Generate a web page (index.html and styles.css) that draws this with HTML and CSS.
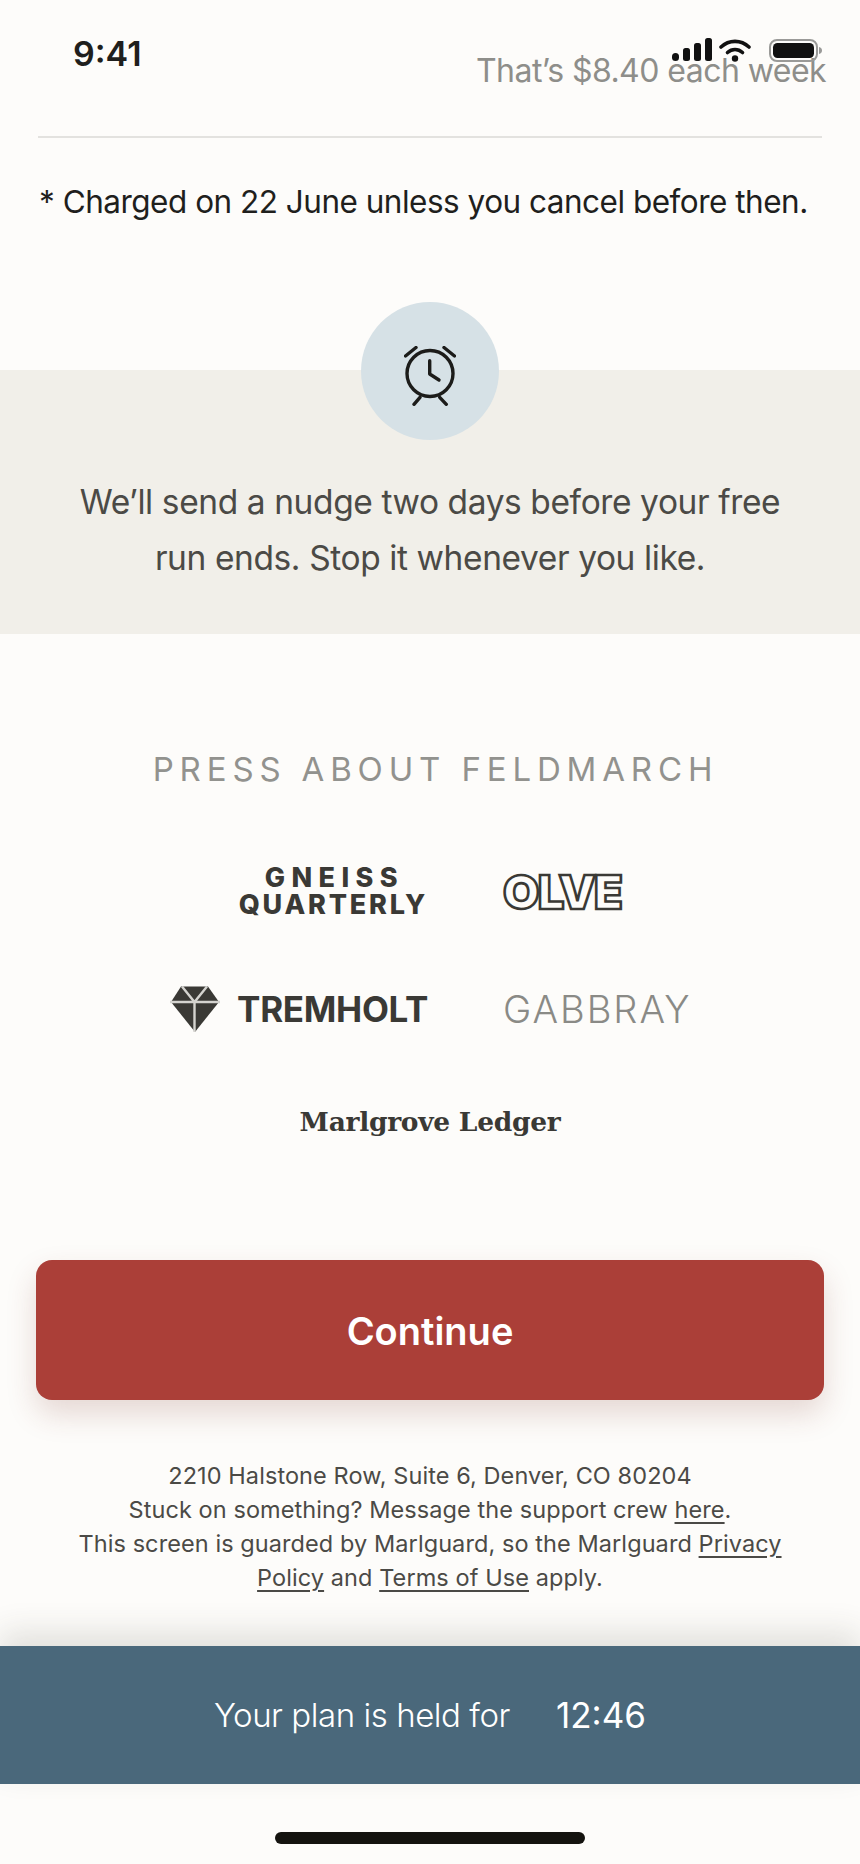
FILE: index.html
```html
<!DOCTYPE html>
<html lang="en">
<head>
    <meta charset="UTF-8">
    <meta name="viewport" content="width=device-width, initial-scale=1.0">
    <title>Feldmarch</title>
    <link rel="stylesheet" href="styles.css">
</head>
<body>
    <div class="status">
        <div class="time">9:41</div>
        <div class="sys">
            <svg width="40" height="26" viewBox="0 0 40 26"><rect x="0" y="15" width="7" height="8" rx="3.5"/><rect x="11" y="10" width="7" height="13" rx="2.5"/><rect x="22" y="5" width="7" height="18" rx="2.5"/><rect x="33" y="0" width="7" height="23" rx="2.5"/></svg>
            <svg width="32" height="26" viewBox="0 0 32 26"><path d="M2 9C10 1.500 22 1.500 30 9" fill="none" stroke="#111" stroke-width="3.600" stroke-linecap="round"/><path d="M8.500 14.500C13 10.500 19 10.500 23.500 14.500" fill="none" stroke="#111" stroke-width="3.600" stroke-linecap="round"/><circle cx="16" cy="20.500" r="3.200"/></svg>
            <svg class="batt" width="54" height="24" viewBox="0 0 54 24"><rect x="1" y="1" width="47" height="21" rx="7" fill="none" stroke="#9a9a98" stroke-width="2"/><rect x="4" y="4" width="41" height="15" rx="4.500"/><path d="M50 8c2 .6 3 1.800 3 3.500s-1 2.900-3 3.500z" fill="#9a9a98"/></svg>
        </div>
    </div>

    <div class="week">That’s $8.40 each week</div>
    <div class="rule"></div>
    <p class="charge">* Charged on 22 June unless you cancel before then.</p>

    <section class="nudge">
        <div class="bell">
            <svg width="52" height="60" viewBox="0 0 52 60" fill="none" stroke="#1c1c1a" stroke-width="3.400" stroke-linecap="round" stroke-linejoin="round">
                <circle cx="26" cy="27.500" r="23"/>
                <path d="M25.700 14.700V28L35 34"/>
                <path d="M1.500 10L12 1.500"/>
                <path d="M50.500 10L40 1.500"/>
                <path d="M16 51.300L10 58.300"/>
                <path d="M35.700 51.300L42.300 58.300"/>
            </svg>
        </div>
        <p>We’ll send a nudge two days before your free run ends. Stop it whenever you like.</p>
    </section>

    <section class="press">
        <h2>PRESS ABOUT FELDMARCH</h2>
        <div class="logos">
            <div class="cell right gneiss"><span class="sp">GNEISS</span><span>QUARTERLY</span></div>
            <div class="cell olve">OLVE</div>
            <div class="cell right trem">
                <svg width="50" height="46" viewBox="0 0 50 46"><path d="M11 .5h27l11 15.500L25 46 1 16z" fill="#3a3935"/><path d="M12 .5L24.500 16 37 .5M0 16h50M24.500 16v30" fill="none" stroke="#d4d3cf" stroke-width="2.400"/></svg>
                <span>TREMHOLT</span>
            </div>
            <div class="cell gabbray">GABBRAY</div>
        </div>
        <div class="ledger">Marlgrove Ledger</div>
    </section>

    <div class="btn">Continue</div>

    <div class="foot">
        2210 Halstone Row, Suite 6, Denver, CO 80204<br>
        Stuck on something? Message the support crew <u>here</u>.<br>
        This screen is guarded by Marlguard, so the Marlguard <u>Privacy<br>Policy</u> and <u>Terms of Use</u> apply.
    </div>

    <div class="timer"><span>Your plan is held for</span><b>12:46</b></div>
    <div class="home"><i></i></div>
</body>
</html>
```

FILE: styles.css
```css
*{
    margin:0;
    padding:0;
    box-sizing:border-box;
}
html,body{
    height:1864px;
    overflow:hidden;
}
body{
    position:relative;
    background:#fdfcfa;
    font-family:Inter,"Liberation Sans",sans-serif;
    color:#1f1f1d;
}
.status{
    position:absolute;
    top:0;
    left:0;
    width:100%;
    height:100px;
}
.time{
    position:absolute;
    left:73px;
    top:33px;
    font-size:34px;
    line-height:42px;
    font-weight:600;
}
.sys{
    position:absolute;
    left:672px;
    top:38px;
    display:flex;
    gap:7px;
}
.sys svg{
    fill:#111;
}
.sys .batt{
    margin-left:11px;
    margin-top:1px;
}
.week{
    padding-top:52px;
    padding-right:34px;
    height:136px;
    text-align:right;
    font-size:32px;
    line-height:38px;
    letter-spacing:-.55px;
    color:#8e8e8a;
}
.rule{
    height:2px;
    margin:0 38px;
    background:#e3e2df;
}
.charge{
    margin-top:44px;
    padding-left:39px;
    font-size:31.500px;
    line-height:40px;
    letter-spacing:-.5px;
    white-space:nowrap;
}
.nudge{
    margin-top:148px;
    height:264px;
    background:#f1efe9;
    text-align:center;
    position:relative;
}
.bell{
    position:absolute;
    left:361px;
    top:-68px;
    width:138px;
    height:138px;
    padding-top:10px;
    border-radius:50%;
    background:#d6e1e6;
    display:flex;
    align-items:center;
    justify-content:center;
}
.nudge p{
    padding:104px 70px 0;
    font-size:33.500px;
    line-height:56px;
    letter-spacing:-.4px;
    color:#4b4a46;
}
.press{
    padding-top:113px;
    text-align:center;
}
.press h2{
    padding-left:11px;
    font-size:33px;
    line-height:44px;
    font-weight:400;
    letter-spacing:5.850px;
    color:#92928e;
}
.logos{
    margin-top:42px;
    display:grid;
    grid-template-columns:428px 1fr;
    grid-template-rows:116px 120px;
    column-gap:75px;
    text-align:left;
}
.cell{
    display:flex;
    align-items:center;
    color:#3a3935;
}
.right{
    justify-content:flex-end;
}
.gneiss{
    flex-direction:column;
    align-items:flex-end;
    justify-content:center;
    font-weight:800;
    font-size:27px;
    line-height:27px;
    letter-spacing:2.800px;
}
.gneiss .sp{
    letter-spacing:6.400px;
    margin-right:24px;
}
.olve{
    font-size:47px;
    font-weight:900;
    color:#fdfcfa;
    -webkit-text-stroke:2.600px #3a3935;
    letter-spacing:-1.800px;
}
.trem{
    gap:17px;
    font-size:35px;
    font-weight:700;
    letter-spacing:-.3px;
}
.gabbray{
    font-size:38px;
    font-weight:300;
    color:#8a8a86;
    letter-spacing:2px;
}
.ledger{
    margin-top:33px;
    font-family:"DejaVu Serif",serif;
    font-size:26.500px;
    line-height:40px;
    font-weight:700;
    color:#3a3935;
    letter-spacing:-.3px;
}
.btn{
    margin:118px 36px 0;
    height:140px;
    border-radius:16px;
    background:#ab3f38;
    box-shadow:0 14px 30px rgba(120,50,40,.18);
    color:#fff;
    font-size:38px;
    font-weight:600;
    line-height:143px;
    text-align:center;
}
.foot{
    margin-top:59px;
    font-size:23.500px;
    line-height:34px;
    text-align:center;
    color:#4b4a46;
    letter-spacing:.08px;
}
.foot u{
    text-underline-offset:4px;
}
.timer{
    margin-top:51px;
    height:138px;
    background:#4a687b;
    box-shadow:0 -14px 30px rgba(60,55,45,.14);
    display:flex;
    align-items:center;
    justify-content:center;
    gap:46px;
    color:#fff;
    font-size:33px;
    font-weight:300;
    letter-spacing:-.45px;
}
.timer b{
    font-weight:400;
    font-size:35px;
    letter-spacing:0;
}
.home{
    padding-top:48px;
    display:flex;
    justify-content:center;
}
.home i{
    display:block;
    width:310px;
    height:12px;
    border-radius:6px;
    background:#14130f;
}
```
